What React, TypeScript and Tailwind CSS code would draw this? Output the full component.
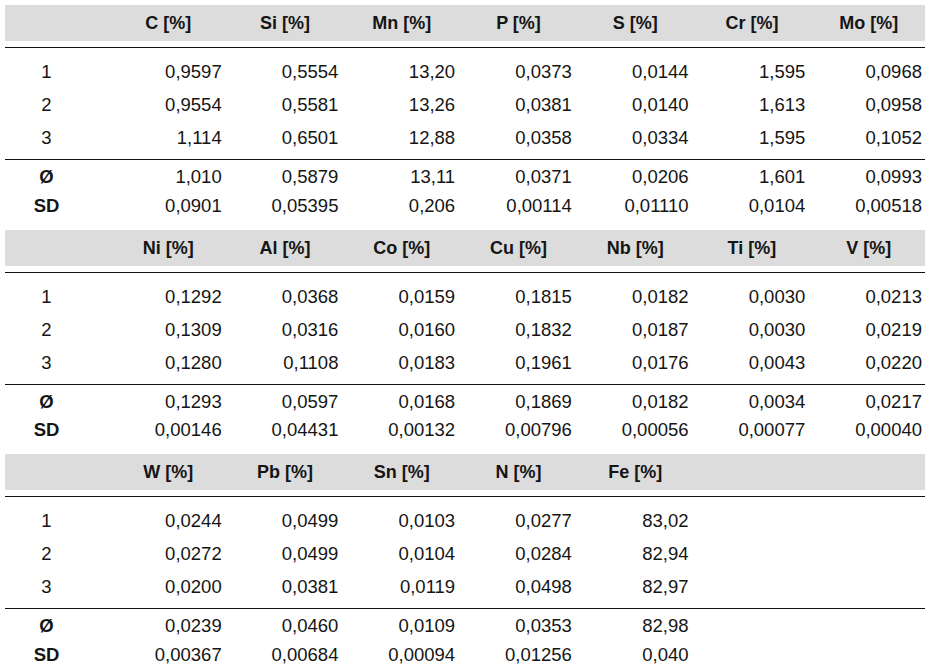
import React from "react";

type Section = {
  headers: string[];
  rows: string[][];
  avg: string[];
  sd: string[];
};

const sections: Section[] = [
  {
    headers: ["C [%]", "Si [%]", "Mn [%]", "P [%]", "S [%]", "Cr [%]", "Mo [%]"],
    rows: [
      ["0,9597", "0,5554", "13,20", "0,0373", "0,0144", "1,595", "0,0968"],
      ["0,9554", "0,5581", "13,26", "0,0381", "0,0140", "1,613", "0,0958"],
      ["1,114", "0,6501", "12,88", "0,0358", "0,0334", "1,595", "0,1052"],
    ],
    avg: ["1,010", "0,5879", "13,11", "0,0371", "0,0206", "1,601", "0,0993"],
    sd: ["0,0901", "0,05395", "0,206", "0,00114", "0,01110", "0,0104", "0,00518"],
  },
  {
    headers: ["Ni [%]", "Al [%]", "Co [%]", "Cu [%]", "Nb [%]", "Ti [%]", "V [%]"],
    rows: [
      ["0,1292", "0,0368", "0,0159", "0,1815", "0,0182", "0,0030", "0,0213"],
      ["0,1309", "0,0316", "0,0160", "0,1832", "0,0187", "0,0030", "0,0219"],
      ["0,1280", "0,1108", "0,0183", "0,1961", "0,0176", "0,0043", "0,0220"],
    ],
    avg: ["0,1293", "0,0597", "0,0168", "0,1869", "0,0182", "0,0034", "0,0217"],
    sd: ["0,00146", "0,04431", "0,00132", "0,00796", "0,00056", "0,00077", "0,00040"],
  },
  {
    headers: ["W [%]", "Pb [%]", "Sn [%]", "N [%]", "Fe [%]", "", ""],
    rows: [
      ["0,0244", "0,0499", "0,0103", "0,0277", "83,02", "", ""],
      ["0,0272", "0,0499", "0,0104", "0,0284", "82,94", "", ""],
      ["0,0200", "0,0381", "0,0119", "0,0498", "82,97", "", ""],
    ],
    avg: ["0,0239", "0,0460", "0,0109", "0,0353", "82,98", "", ""],
    sd: ["0,00367", "0,00684", "0,00094", "0,01256", "0,040", "", ""],
  },
];

const grid = "grid grid-cols-[100px_repeat(7,1fr)] pr-[3px]";

function DataRow({ label, values, bold, h }: { label: string; values: string[]; bold?: boolean; h: string }) {
  return (
    <div className={`${grid} ${h} items-center`}>
      <div className={`text-center pr-[17px] ${bold ? "font-bold" : ""}`}>{label}</div>
      {values.map((v, i) => (
        <div key={i} className="text-right">
          {v}
        </div>
      ))}
    </div>
  );
}

function SectionBlock({ s }: { s: Section }) {
  return (
    <div className="flex flex-col h-[224.5px]">
      <div className={`${grid} h-[36px] items-center bg-[#dcdcdc] font-bold text-[18px]`}>
        <div />
        {s.headers.map((hd, i) => (
          <div key={i} className="text-center pl-[10px]">
            {hd}
          </div>
        ))}
      </div>
      <div className="h-[6px]" />
      <div className="border-t border-[#111] pt-[8px] pb-[4px]">
        {s.rows.map((r, i) => (
          <DataRow key={i} label={String(i + 1)} values={r} h="h-[33px]" />
        ))}
      </div>
      <div className="border-t border-[#111] pt-[3px]">
        <DataRow label="Ø" values={s.avg} bold h="h-[29px]" />
        <DataRow label="SD" values={s.sd} bold h="h-[28px]" />
      </div>
    </div>
  );
}

export default function App() {
  return (
    <div
      className="w-[931px] h-[669px] bg-white text-[#151515] text-[18.5px] leading-none overflow-hidden"
      style={{ fontFamily: '"Liberation Sans", Arial, sans-serif' }}
    >
      <div className="ml-[5px] w-[920px] pt-[5px] flex flex-col">
        {sections.map((s, i) => (
          <SectionBlock key={i} s={s} />
        ))}
      </div>
    </div>
  );
}
